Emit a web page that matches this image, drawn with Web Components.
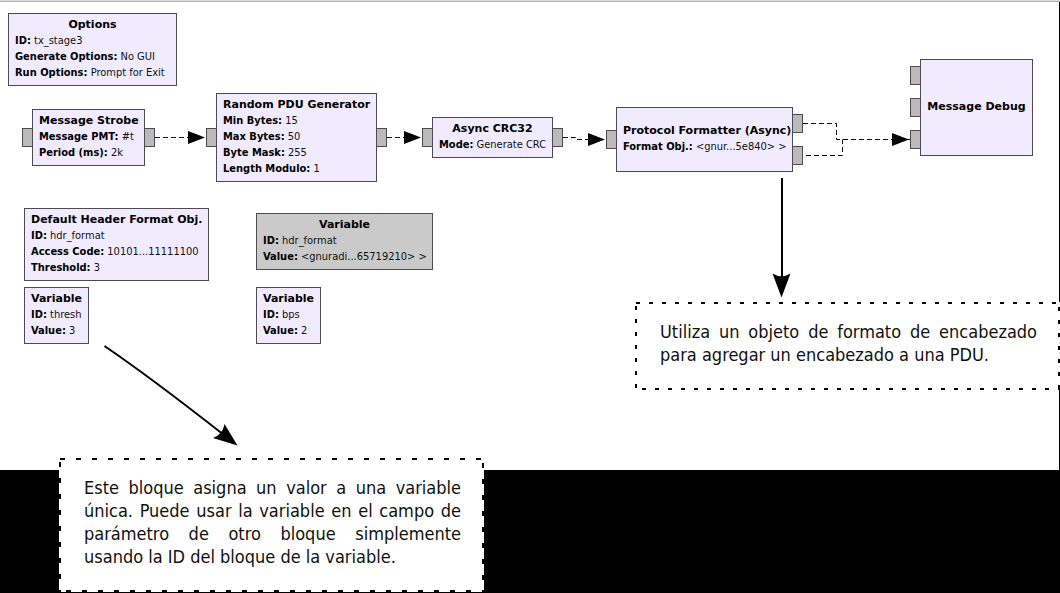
<!DOCTYPE html>
<html lang="es">
<head>
<meta charset="utf-8">
<title>tx_stage3</title>
<style>
  html { background: #000; }
  body { margin: 0; min-height: 100vh; font-family: "DejaVu Sans Condensed", "DejaVu Sans", sans-serif; }
</style>
</head>
<body>
<flow-canvas>
  <flow-wires></flow-wires>

  <flow-block style="left:8px;top:13px;width:169px" name="Options">
    <block-param label="ID:">tx_stage3</block-param>
    <block-param label="Generate Options:">No GUI</block-param>
    <block-param label="Run Options:">Prompt for Exit</block-param>
  </flow-block>
  <flow-block style="left:32px;top:109px;width:113px" name="Message Strobe" inputs="1" outputs="1">
    <block-param label="Message PMT:">#t</block-param>
    <block-param label="Period (ms):">2k</block-param>
  </flow-block>
  <flow-block style="left:216px;top:93px;width:161px" name="Random PDU Generator" inputs="1" outputs="1">
    <block-param label="Min Bytes:">15</block-param>
    <block-param label="Max Bytes:">50</block-param>
    <block-param label="Byte Mask:">255</block-param>
    <block-param label="Length Modulo:">1</block-param>
  </flow-block>
  <flow-block style="left:432px;top:117px;width:121px" name="Async CRC32" inputs="1" outputs="1">
    <block-param label="Mode:">Generate CRC</block-param>
  </flow-block>
  <flow-block style="left:616px;top:107px;width:177px;min-height:65px" name="Protocol Formatter (Async)" inputs="1" outputs="2">
    <block-param label="Format Obj.:">&lt;gnur...5e840&gt; &gt;</block-param>
  </flow-block>
  <flow-block style="left:920px;top:59px;width:113px;min-height:97px" name="Message Debug" inputs="3"></flow-block>

  <flow-block style="left:24px;top:208px;width:185px" name="Default Header Format Obj.">
    <block-param label="ID:">hdr_format</block-param>
    <block-param label="Access Code:">10101...11111100</block-param>
    <block-param label="Threshold:">3</block-param>
  </flow-block>
  <flow-block style="left:24px;top:287px;width:65px" name="Variable">
    <block-param label="ID:">thresh</block-param>
    <block-param label="Value:">3</block-param>
  </flow-block>
  <flow-block disabled style="left:256px;top:213px;width:177px" name="Variable">
    <block-param label="ID:">hdr_format</block-param>
    <block-param label="Value:">&lt;gnuradi...65719210&gt; &gt;</block-param>
  </flow-block>
  <flow-block style="left:256px;top:287px;width:65px" name="Variable">
    <block-param label="ID:">bps</block-param>
    <block-param label="Value:">2</block-param>
  </flow-block>

  <side-note style="left:635px;top:302px;width:425px" dash="fine">Utiliza un objeto de formato de encabezado para agregar un encabezado a una PDU.</side-note>
  <side-note style="left:59px;top:458px;width:425px" dash="wide">Este bloque asigna un valor a una variable única. Puede usar la variable en el campo de parámetro de otro bloque simplemente usando la ID del bloque de la variable.</side-note>
</flow-canvas>

<script>
class FlowCanvas extends HTMLElement {
  constructor() {
    super();
    this.attachShadow({ mode: 'open' }).innerHTML = `
      <style>
        :host { display: block; position: relative; box-sizing: border-box; min-height: 470px;
          background: #fff; box-shadow: inset 0 1px #dcdcdc, inset 0 2px #b0b0b0, inset -1px 0 #000; }
      </style>
      <slot></slot>`;
  }
}

class BlockParam extends HTMLElement {
  constructor() {
    super();
    this.attachShadow({ mode: 'open' }).innerHTML = `
      <style>
        :host { display: block; font-size: 11px; line-height: 16px; white-space: nowrap; color: #111; }
        b { font-weight: 700; color: #000; }
      </style>
      <b></b> <slot></slot>`;
  }
  connectedCallback() {
    this.shadowRoot.querySelector('b').textContent = this.getAttribute('label');
  }
}

class FlowBlock extends HTMLElement {
  constructor() {
    super();
    this.attachShadow({ mode: 'open' }).innerHTML = `
      <style>
        :host { position: absolute; box-sizing: border-box; display: flex; flex-direction: column;
          justify-content: center; padding: 3px 6px 4px; border: 1px solid #4c4c50;
          background: #f0ebff; color: #000; }
        :host([disabled]) { background: #cacaca; }
        h2 { margin: 0; font: 700 11px/16px "DejaVu Sans", sans-serif; text-align: center; white-space: nowrap; }
        .ports { position: absolute; top: 0; bottom: 0; display: flex; flex-direction: column;
          justify-content: center; gap: 13px; }
        .in { right: 100%; }
        .out { left: 100%; }
        i { box-sizing: border-box; width: 11px; height: 19px; border: 1px solid #4c4c50; background: #bababa; }
      </style>
      <div class="ports in"></div>
      <h2></h2>
      <slot></slot>
      <div class="ports out"></div>`;
  }
  connectedCallback() {
    const root = this.shadowRoot;
    root.querySelector('h2').textContent = this.getAttribute('name');
    root.querySelector('.in').innerHTML = '<i></i>'.repeat(+this.getAttribute('inputs'));
    root.querySelector('.out').innerHTML = '<i></i>'.repeat(+this.getAttribute('outputs'));
  }
}

class FlowWires extends HTMLElement {
  constructor() {
    super();
    this.attachShadow({ mode: 'open' }).innerHTML = `
      <style>
        :host { position: absolute; left: 0; top: 0; }
        svg { display: block; overflow: visible; }
        .wire { fill: none; stroke: #000; stroke-dasharray: 5 3; }
        .pointer { fill: none; stroke: #000; stroke-width: 2; }
      </style>
      <svg width="1" height="1" aria-hidden="true">
        <g class="wire">
          <path d="M155 137.5H188"/>
          <path d="M387 137.5H404"/>
          <path d="M563 137.5H575.5V139.5H588"/>
          <path d="M803 123.5H836.5V139.5H911"/>
          <path d="M806 155.5H842.5V139.5"/>
        </g>
        <path d="M188 131L205 137.5L188 144ZM404 131L421 137.5L404 144ZM588 133L605 139.5L588 146ZM892 133L909 139.5L892 146Z"/>
        <path class="pointer" d="M782 178V278M104.500 346Q150 377 224 435"/>
        <path d="M781.500 297.500L772.500 273.500Q781.500 279 790.500 273.500ZM237.500 445.500L213 438Q223 434 224.500 424Z"/>
      </svg>`;
  }
}

class SideNote extends HTMLElement {
  constructor() {
    super();
    this.attachShadow({ mode: 'open' }).innerHTML = `
      <style>
        :host { position: absolute; box-sizing: border-box; padding: 18px 23px 24px 25px; background: #fff; }
        p { margin: 0; font-size: 18px; line-height: 23px; text-align: justify; color: #111; }
        svg { position: absolute; left: 0; top: 0; width: 100%; height: 100%; }
        line { stroke: #000; stroke-width: 4; stroke-dasharray: 4 9; }
        :host([dash="wide"]) line { stroke-dasharray: 5 11; }
      </style>
      <p><slot></slot></p>
      <svg aria-hidden="true">
        <line x1="1" y1="0" x2="100%" y2="0"/>
        <line x1="0" y1="100%" x2="100%" y2="100%" stroke-dashoffset="-7"/>
        <line x1="0" y1="0" x2="0" y2="100%" stroke-dashoffset="-4"/>
        <line x1="100%" y1="0" x2="100%" y2="100%" stroke-dashoffset="-5"/>
      </svg>`;
  }
}

customElements.define('flow-canvas', FlowCanvas);
customElements.define('block-param', BlockParam);
customElements.define('flow-block', FlowBlock);
customElements.define('flow-wires', FlowWires);
customElements.define('side-note', SideNote);
</script>
</body>
</html>
